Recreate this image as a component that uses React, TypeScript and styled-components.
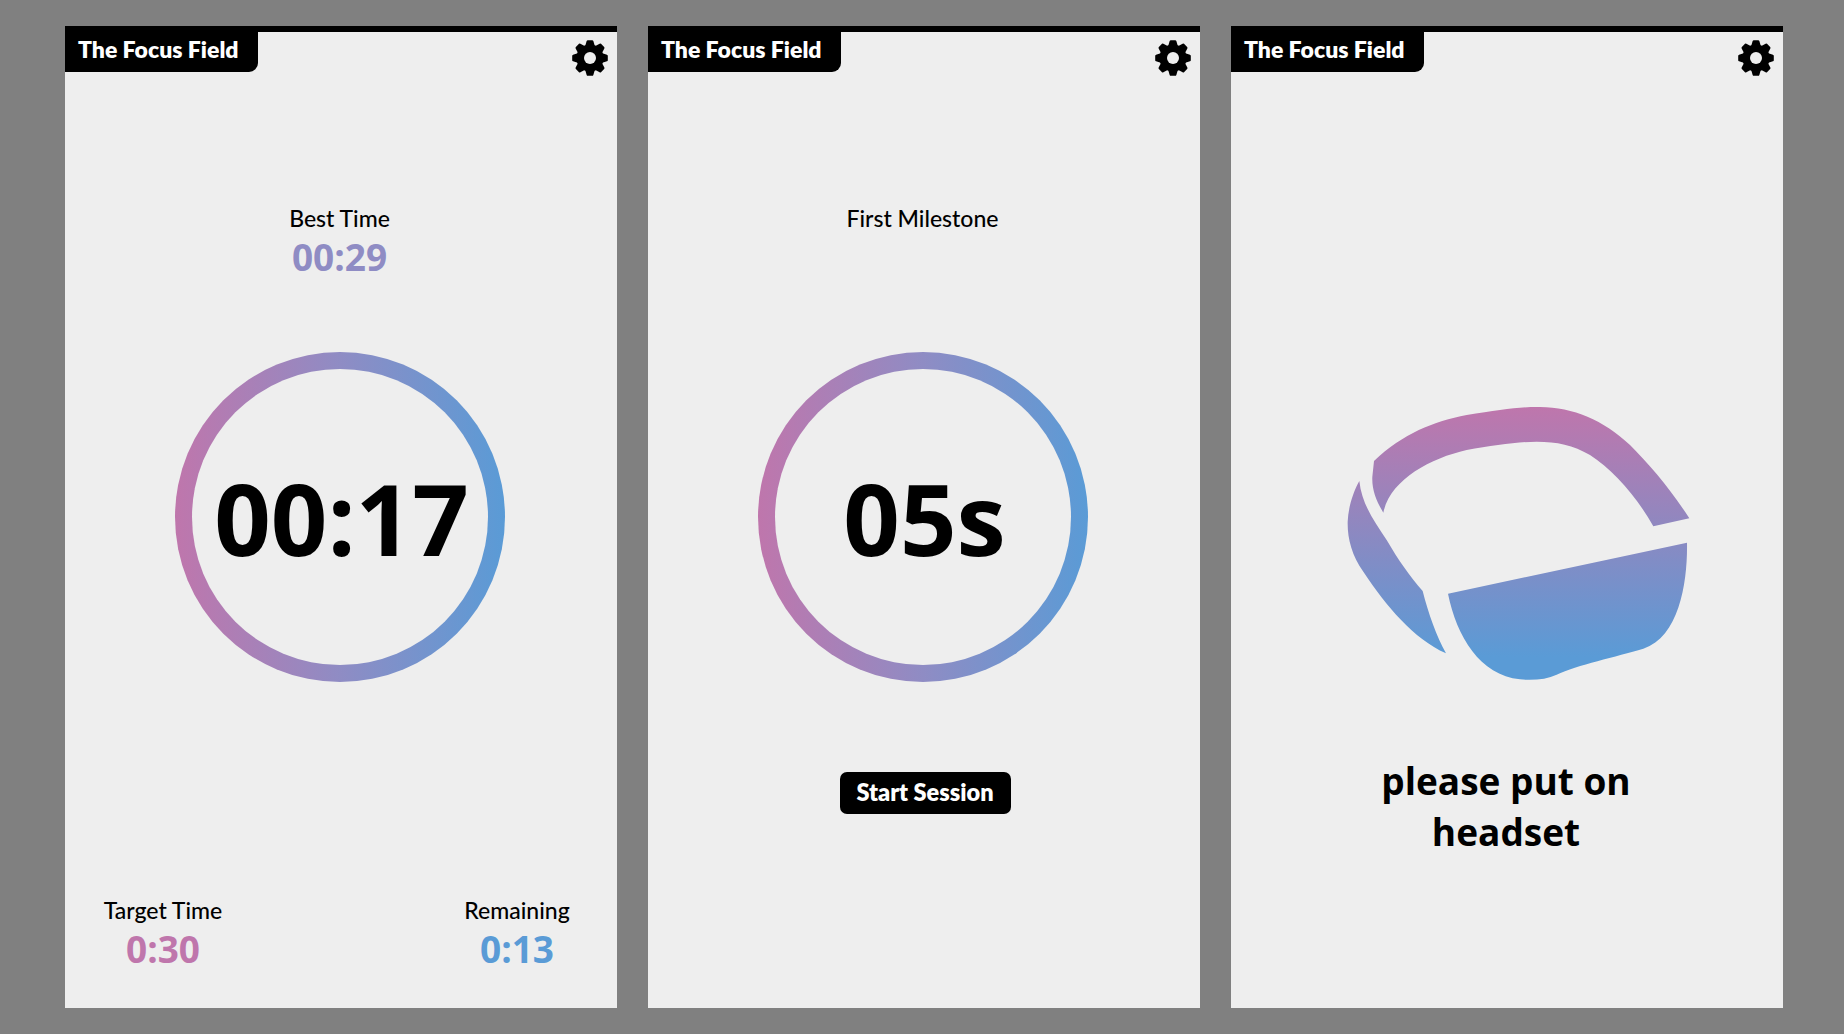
import React from 'react';
import styled, { createGlobalStyle } from 'styled-components';

const GlobalStyle = createGlobalStyle`
  html, body {
    margin: 0;
    padding: 0;
    background: #808080;
  }
`;

const Page = styled.div`
  width: 1844px;
  height: 1034px;
  box-sizing: border-box;
  padding: 26px 61px 26px 65px;
  display: flex;
  gap: 31px;
  overflow: hidden;
`;

const Panel = styled.section`
  width: 552px;
  height: 982px;
  background: #eeeeee;
  border-top: 6px solid #000;
  box-sizing: border-box;
  display: flex;
  flex-direction: column;
  align-items: center;
`;

const Header = styled.header`
  align-self: stretch;
  height: 51px;
  display: flex;
  justify-content: space-between;
  align-items: flex-start;
`;

const Brand = styled.div`
  width: 193px;
  height: 40px;
  padding: 4px 0 0 13px;
  box-sizing: border-box;
  background: #000;
  color: #fff;
  border-radius: 0 0 9px 0;
  font: 800 23px/26px Lato, sans-serif;
`;

const GearButton = styled.div`
  margin: 8px 9px 0 0;
  display: flex;
`;

const Stat = styled.div`
  width: 180px;
  text-align: center;
`;

const TopStat = styled(Stat)`
  margin: 122px 3px 0 0;
`;

const Label = styled.div`
  color: #000;
  font: 500 23px/26px Lato, sans-serif;
`;

const Value = styled.div<{ $color: string }>`
  color: ${(p) => p.$color};
  font: 700 37px/51px "Open Sans", sans-serif;
`;

const Ring = styled.div`
  margin: 70px 2px 0 0;
  width: 330px;
  height: 330px;
  padding: 17px;
  box-sizing: border-box;
  border-radius: 50%;
  background: linear-gradient(90deg, #bf76ac 0%, #8f8cc4 50%, #5a9bd6 100%);
`;

const RingInner = styled.div`
  width: 100%;
  height: 100%;
  padding-left: 3px;
  box-sizing: border-box;
  border-radius: 50%;
  background: #eeeeee;
  display: flex;
  align-items: center;
  justify-content: center;
  color: #000;
  font: 700 99px/1 "Open Sans", sans-serif;
`;

const BottomStats = styled.div`
  margin-top: auto;
  margin-bottom: 34px;
  align-self: stretch;
  display: flex;
  justify-content: space-between;
  padding: 0 10px 0 8px;
`;

const StartButton = styled.button`
  margin: 90px 0 0 2px;
  width: 171px;
  height: 42px;
  border: 0;
  border-radius: 7px;
  background: #000;
  color: #fff;
  font: 800 23.5px/1 Lato, sans-serif;
`;

const LogoWrap = styled.div`
  margin-top: 297px;
  align-self: flex-start;
  margin-left: 89px;
  display: flex;
`;

const Prompt = styled.h2`
  margin: 55px 0 0 -2px;
  width: 300px;
  text-align: center;
  color: #000;
  font: 700 37px/51px "Open Sans", sans-serif;
`;

// 8 tooth cog, teeth taper toward the tip
const Gear = () => (
  <svg width="36" height="36" viewBox="0 0 36 36" aria-hidden="true">
    <g transform="translate(18 18)" fill="#000" stroke="#000" strokeWidth="2.4" strokeLinejoin="round">
      {[0, 45, 90, 135].map((a) => (
        <polygon
          key={a}
          points="-3.6,-12 -2.2,-16.6 2.2,-16.6 3.6,-12 3.6,12 2.2,16.6 -2.2,16.6 -3.6,12"
          transform={`rotate(${a})`}
        />
      ))}
      <circle r="12.4" />
    </g>
    <circle cx="18" cy="18" r="6" fill="#eeeeee" />
  </svg>
);

const HeadsetLogo = () => (
  <svg width="400" height="320" viewBox="0 0 1200 960" role="img" aria-label="headset">
    <defs>
      <linearGradient id="headsetGrad" gradientUnits="userSpaceOnUse" x1="0" y1="80" x2="0" y2="830">
        <stop offset="0" stopColor="#bf76ac" />
        <stop offset="1" stopColor="#5a9bd6" />
      </linearGradient>
    </defs>
    <g fill="url(#headsetGrad)">
      <path d="M162 243 C250 160 340 125 440 105 C540 90 600 80 660 81 C760 82 850 120 930 195 C990 255 1050 325 1108 415 L1000 439 C950 350 880 270 810 225 C760 195 710 185 650 185 C590 186 520 197 440 210 C330 235 210 300 190 398 C170 365 155 330 157 290 Z" />
      <path d="M118 303 C125 370 160 420 200 480 C235 540 270 590 308 633 C325 700 350 770 378 820 C280 775 200 680 130 575 C95 525 82 475 83 425 C85 380 100 335 118 303 Z" />
      <path d="M384 641 L1101 488 C1103 600 1080 770 970 806 C890 830 770 855 710 884 C680 898 640 902 600 898 C480 885 410 770 384 641 Z" />
    </g>
  </svg>
);

const TopBar = () => (
  <Header>
    <Brand>The Focus Field</Brand>
    <GearButton>
      <Gear />
    </GearButton>
  </Header>
);

export default function App() {
  return (
    <>
      <GlobalStyle />
      <Page>
        <Panel>
          <TopBar />
          <TopStat>
            <Label>Best Time</Label>
            <Value $color="#8f8cc4">00:29</Value>
          </TopStat>
          <Ring>
            <RingInner>00:17</RingInner>
          </Ring>
          <BottomStats>
            <Stat>
              <Label>Target Time</Label>
              <Value $color="#bf76ac">0:30</Value>
            </Stat>
            <Stat>
              <Label>Remaining</Label>
              <Value $color="#5a9bd6">0:13</Value>
            </Stat>
          </BottomStats>
        </Panel>
        <Panel>
          <TopBar />
          <TopStat>
            <Label>First Milestone</Label>
            <Value $color="transparent">&nbsp;</Value>
          </TopStat>
          <Ring>
            <RingInner>05s</RingInner>
          </Ring>
          <StartButton>Start Session</StartButton>
        </Panel>
        <Panel>
          <TopBar />
          <LogoWrap>
            <HeadsetLogo />
          </LogoWrap>
          <Prompt>
            please put on
            <br />
            headset
          </Prompt>
        </Panel>
      </Page>
    </>
  );
}
